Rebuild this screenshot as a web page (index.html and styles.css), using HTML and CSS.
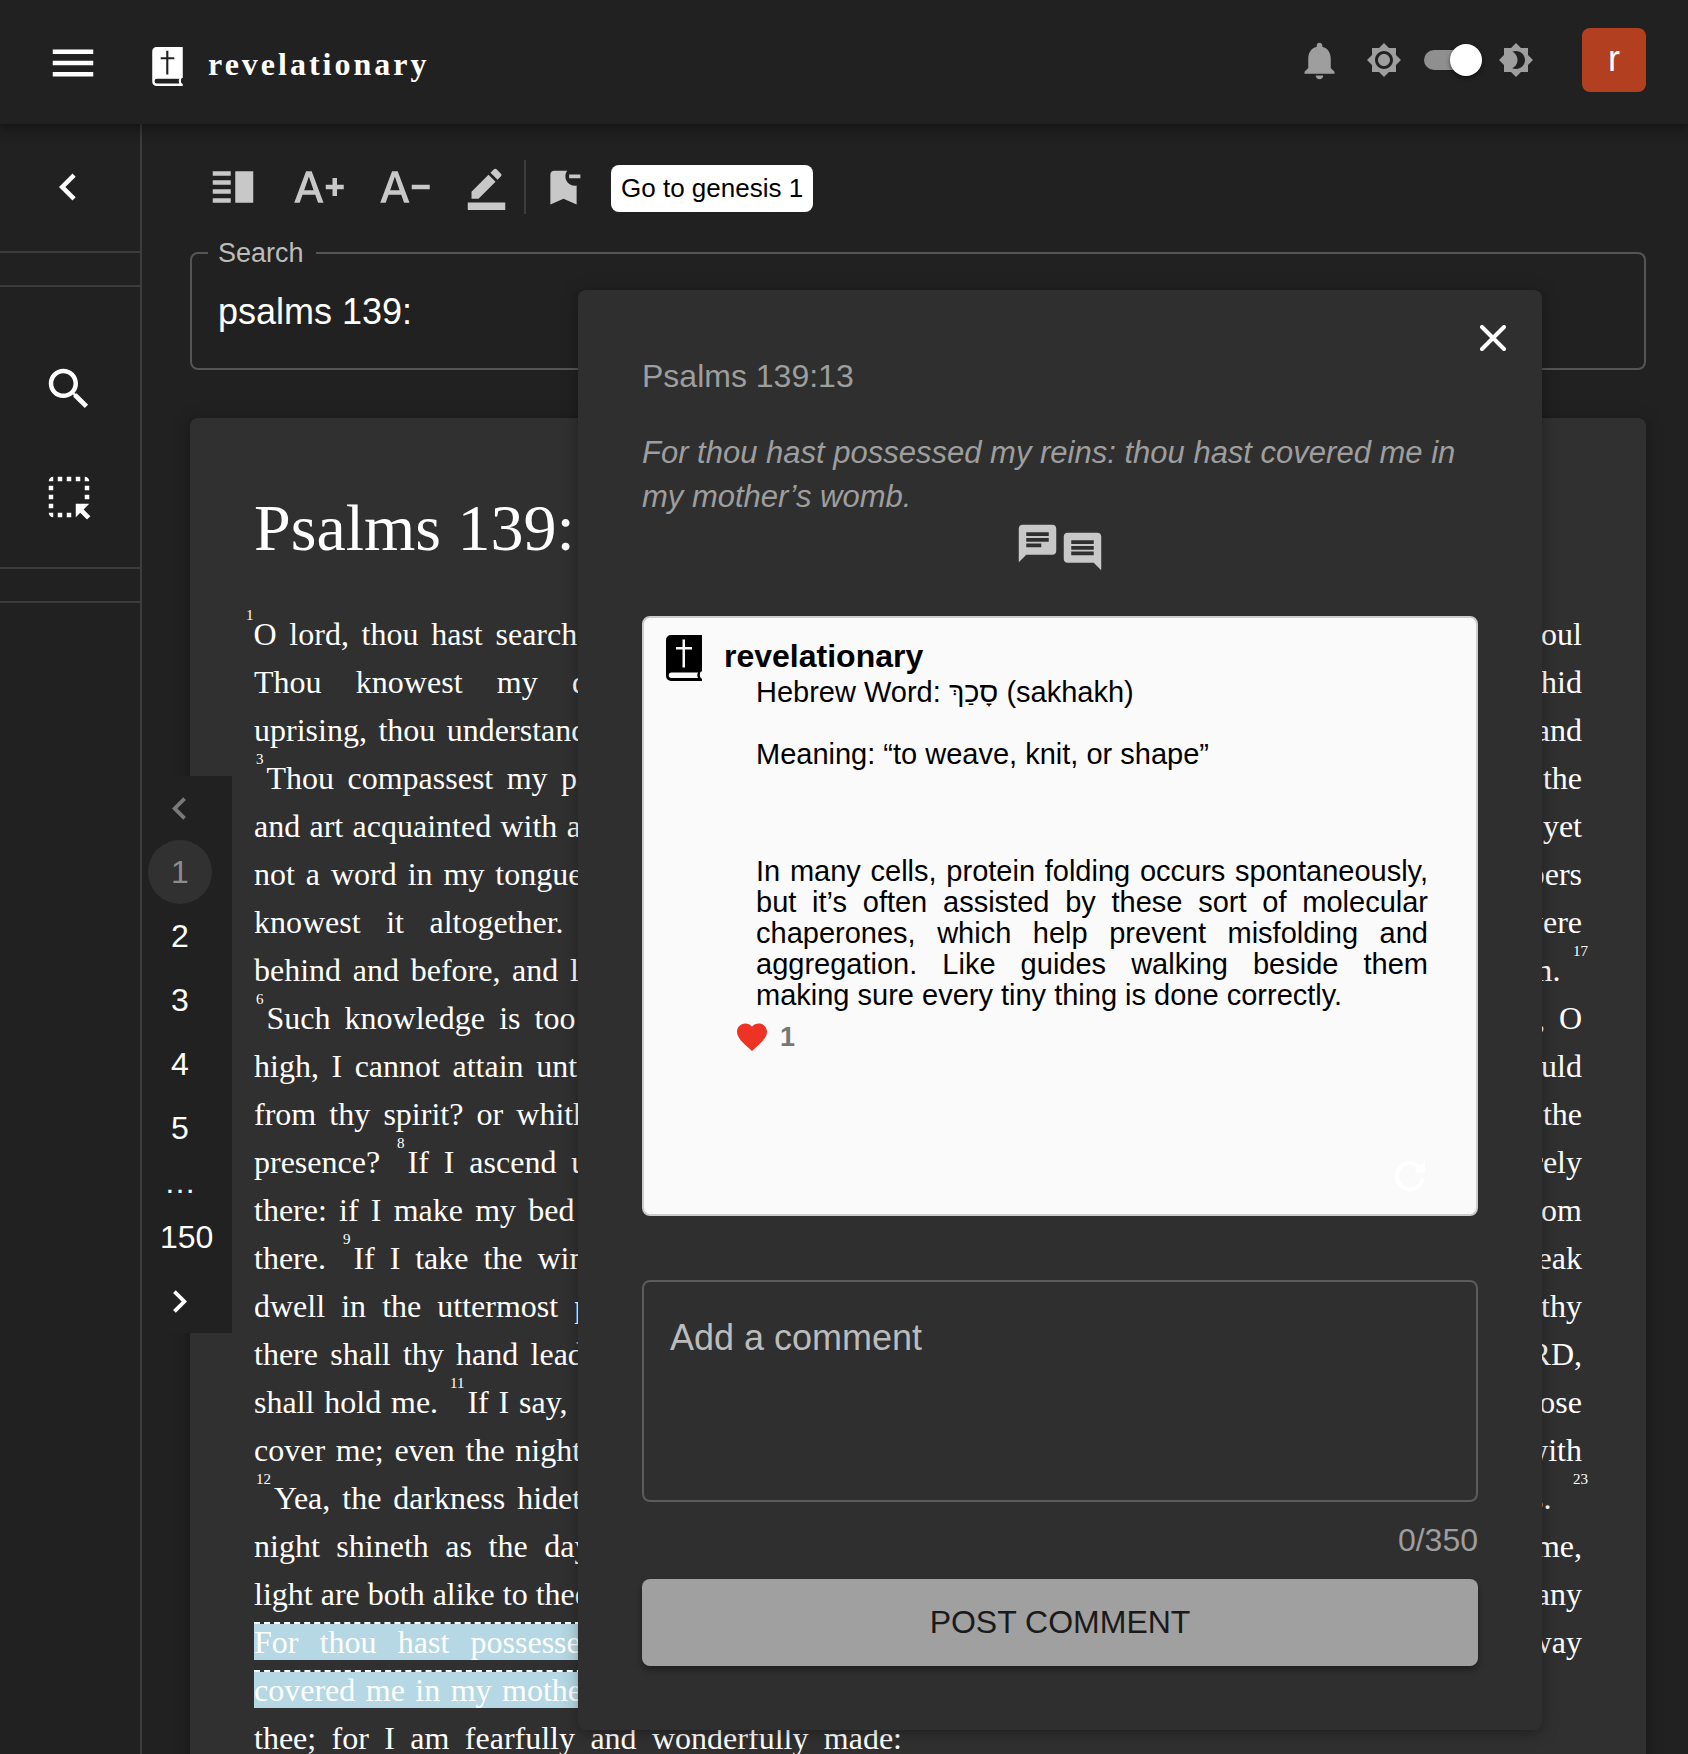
FILE: index.html
```html
<!DOCTYPE html>
<html lang="en">
<head>
<meta charset="utf-8">
<title>revelationary</title>
<link rel="stylesheet" href="styles.css">
</head>
<body>
<svg width="0" height="0" hidden>
  <symbol id="book" viewBox="0 0 36 46">
    <path fill-rule="evenodd" d="M5 0H36V36.500H35C33.500 37.500 33.500 42 35 43L36 44V46H5A5 5 0 0 1 0 41V5A5 5 0 0 1 5 0ZM5.500 37.500A2.700 2.700 0 0 0 5.500 43H32C31 41 31 39.500 32 37.500ZM16.500 4.500V12H10V14.500H16.500V32.500H19V14.500H26V12H19V4.500Z"/>
  </symbol>
  <symbol id="chev" viewBox="0 0 24 24"><path d="M15.410 7.410 14 6l-6 6 6 6 1.410-1.410L10.830 12z"/></symbol>
</svg>

<header class="topbar">
  <button class="icon-btn menu" aria-label="Menu"><svg class="icon i-lg" viewBox="0 0 24 24"><path d="M3 18h18v-2H3v2zm0-5h18v-2H3v2zm0-7v2h18V6H3z"/></svg></button>
  <a class="brand" href="#"><svg class="brand-logo"><use href="#book"/></svg><span>revelationary</span></a>
  <div class="actions">
    <button class="icon-btn" aria-label="Notifications"><svg class="icon i-md" viewBox="0 0 24 24"><path d="M12 22c1.100 0 2-.9 2-2h-4c0 1.100.89 2 2 2zm6-6v-5c0-3.070-1.640-5.640-4.500-6.320V4c0-.83-.67-1.500-1.500-1.500s-1.500.67-1.500 1.500v.68C7.630 5.360 6 7.920 6 11v5l-2 2v1h16v-1l-2-2z"/></svg></button>
    <label class="theme" for="dark">
      <svg class="icon i-sm" viewBox="0 0 24 24"><path d="M20 8.690V4h-4.690L12 .69 8.690 4H4v4.690L.69 12 4 15.310V20h4.690L12 23.310 15.310 20H20v-4.690L23.310 12 20 8.690zM12 18c-3.310 0-6-2.690-6-6s2.690-6 6-6 6 2.690 6 6-2.690 6-6 6zm0-10c-2.210 0-4 1.790-4 4s1.790 4 4 4 4-1.790 4-4-1.790-4-4-4z"/></svg>
      <input id="dark" class="switch" type="checkbox" role="switch" aria-label="Dark theme" checked>
      <svg class="icon i-sm" viewBox="0 0 24 24"><path d="M20 8.690V4h-4.690L12 .69 8.690 4H4v4.690L.69 12 4 15.310V20h4.690L12 23.310 15.310 20H20v-4.690L23.310 12 20 8.690zM12 18c-.89 0-1.740-.2-2.500-.55C11.560 16.500 13 14.420 13 12s-1.440-4.500-3.500-5.450C10.260 6.200 11.110 6 12 6c3.310 0 6 2.690 6 6s-2.690 6-6 6z"/></svg>
    </label>
    <button class="avatar">r</button>
  </div>
</header>

<div class="shell">
  <nav class="rail" aria-label="Tools">
    <div class="rail-top"><button class="icon-btn" aria-label="Collapse"><svg class="icon i-lg"><use href="#chev"/></svg></button></div>
    <div class="rail-tools">
      <button class="icon-btn" aria-label="Search"><svg class="icon i-lg" viewBox="0 0 24 24"><path d="M15.500 14h-.79l-.28-.27C15.410 12.590 16 11.110 16 9.500 16 5.910 13.090 3 9.500 3S3 5.910 3 9.500 5.910 16 9.500 16c1.610 0 3.090-.59 4.230-1.570l.27.28v.79l5 4.990L20.490 19l-4.990-5zm-6 0C7.010 14 5 11.990 5 9.500S7.010 5 9.500 5 14 7.010 14 9.500 11.990 14 9.500 14z"/></svg></button>
      <button class="icon-btn" aria-label="Select"><svg class="icon i-lg" viewBox="0 0 24 24"><path d="M17 5h-2V3h2v2zm-2 16 2-2 3 3 1.500-1.500-3-3L21 15h-6v6zm4-12h2V7h-2v2zm0 4h2v-2h-2v2zm-8 8h2v-2h-2v2zM7 5h2V3H7v2zM3 17h2v-2H3v2zm2 4v-2H3c0 1.100.9 2 2 2zM19 3v2h2c0-1.100-.9-2-2-2zm-8 2h2V3h-2v2zM3 9h2V7H3v2zm4 12h2v-2H7v2zm-4-8h2v-2H3v2zm0-8h2V3c-1.100 0-2 .9-2 2z"/></svg></button>
    </div>
    <div class="rail-gap"></div>
  </nav>

  <main class="content">
    <div class="toolbar">
      <button class="icon-btn" aria-label="Columns"><svg class="icon i-lg" viewBox="0 0 24 24"><path d="M3 15h8v-2H3v2zm0 4h8v-2H3v2zm0-8h8V9H3v2zm0-6v2h8V5H3zm10 0h8v14h-8V5z"/></svg></button>
      <button class="icon-btn" aria-label="Larger text"><svg class="icon i-lg" viewBox="0 0 24 24"><path d="M.99 19h2.420l1.270-3.580h5.650L11.590 19h2.420L8.750 5h-2.500L.99 19zm4.420-5.610L7.440 7.600h.12l2.030 5.790H5.410zM20 11h3v2h-3v3h-2v-3h-3v-2h3V8h2v3z"/></svg></button>
      <button class="icon-btn" aria-label="Smaller text"><svg class="icon i-lg" viewBox="0 0 24 24"><path d="M.99 19h2.420l1.270-3.580h5.650L11.590 19h2.420L8.750 5h-2.500L.99 19zm4.420-5.610L7.440 7.600h.12l2.030 5.790H5.410zM23 11v2h-8v-2h8z"/></svg></button>
      <button class="icon-btn" aria-label="Highlight"><svg class="icon i-md" viewBox="0 0 24 24"><path d="M22 24H2v-4h20v4zM13.060 5.190l3.750 3.750L7.750 18H4v-3.750l9.060-9.060zm4.820 2.680-3.750-3.750 1.830-1.830c.39-.39 1.020-.39 1.410 0l2.340 2.340c.39.39.39 1.020 0 1.410l-1.830 1.830z"/></svg></button>
      <span class="divider"></span>
      <button class="icon-btn" aria-label="Remove bookmark"><svg class="icon i-md" viewBox="0 0 24 24"><path d="M21 7h-6V5h6v2zm-2 3.900c-.32.07-.66.1-1 .1-2.760 0-5-2.240-5-5 0-1.130.37-2.160 1-3H7c-1.100 0-2 .9-2 2v16l7-3 7 3V10.900z"/></svg></button>
      <button class="goto">Go to genesis 1</button>
    </div>

    <fieldset class="search">
      <legend><label for="q">Search</label></legend>
      <input id="q" type="text" value="psalms 139:">
    </fieldset>

    <article class="chapter">
      <h1>Psalms 139:</h1>
      <div class="columns">
        <p><sup class="first">1</sup>O lord, thou hast searched me, and known me. <sup class="end">2</sup><br>
Thou knowest my downsitting and mine<br>
uprising, thou understandest my thought afar off.<br>
<sup>3</sup>Thou compassest my path and my lying down,<br>
and art acquainted with all my ways. <sup>4</sup>For there is<br>
not a word in my tongue, but, lo, O LORD, thou<br>
knowest it altogether. <sup>5</sup>Thou hast beset me<br>
behind and before, and laid thine hand upon me.<br>
<sup>6</sup>Such knowledge is too wonderful for me; it is<br>
high, I cannot attain unto it. <sup>7</sup>Whither shall I go<br>
from thy spirit? or whither shall I flee from thy<br>
presence? <sup>8</sup>If I ascend up into heaven, thou art<br>
there: if I make my bed in hell, behold, thou art<br>
there. <sup>9</sup>If I take the wings of the morning, and<br>
dwell in the uttermost parts of the sea; <sup>10</sup>Even<br>
there shall thy hand lead me, and thy right hand<br>
shall hold me. <sup>11</sup>If I say, Surely the darkness shall<br>
cover me; even the night shall be light about me.<br>
<sup>12</sup>Yea, the darkness hideth not from thee; but the<br>
night shineth as the day: the darkness and the<br>
<span class="last">light are both alike to thee. <sup>13</sup></span>
<mark>For thou hast possessed my reins: thou hast<br>
covered me in my mother’s womb.</mark> <sup>14</sup>I will praise<br>
thee; for I am fearfully and wonderfully made:</p>
        <p>marvellous are thy works; and that my soul<br>
knoweth right well. <sup>15</sup>My substance was not hid<br>
from thee, when I was made in secret, and<br>
curiously wrought in the lowest parts of the<br>
earth. <sup>16</sup>Thine eyes did see my substance, yet<br>
being unperfect; and in thy book all my members<br>
were written, which in continuance were<br>
fashioned, when as yet there was none of them. <sup class="end">17</sup><br>
How precious also are thy thoughts unto me, O<br>
God! how great is the sum of them! <sup>18</sup>If I should<br>
count them, they are more in number than the<br>
sand: when I awake, I am still with thee. <sup>19</sup>Surely<br>
thou wilt slay the wicked, O God: depart from<br>
me therefore, ye bloody men. <sup>20</sup>For they speak<br>
against thee wickedly, and thine enemies take thy<br>
name in vain. <sup>21</sup>Do not I hate them, O LORD,<br>
that hate thee? and am not I grieved with those<br>
that rise up against thee? <sup>22</sup>I hate them with<br>
perfect hatred: I count them mine enemies. <sup class="end">23</sup><br>
Search me, O God, and know my heart: try me,<br>
and know my thoughts: <sup>24</sup>And see if there be any<br>
wicked way in me, and lead me in the way<br>
<span class="last">everlasting.</span></p>
      </div>
    </article>
  </main>
</div>

<nav class="pager" aria-label="Chapters">
  <button disabled aria-label="Previous"><svg class="icon i-md"><use href="#chev"/></svg></button>
  <button class="current">1</button>
  <button>2</button>
  <button>3</button>
  <button>4</button>
  <button>5</button>
  <span>…</span>
  <button>150</button>
  <button aria-label="Next"><svg class="icon i-md flip"><use href="#chev"/></svg></button>
</nav>

<section class="dialog" role="dialog" aria-labelledby="ref">
  <button class="close" aria-label="Close"><svg viewBox="0 0 26 26"><path d="M2 2 24 24M24 2 2 24"/></svg></button>
  <h2 id="ref">Psalms 139:13</h2>
  <blockquote>For thou hast possessed my reins: thou hast covered me in my mother’s womb.</blockquote>
  <div class="talk">
    <svg class="icon i-md" viewBox="0 0 24 24"><path d="M20 2H4c-1.100 0-1.990.9-1.990 2L2 22l4-4h14c1.100 0 2-.9 2-2V4c0-1.100-.9-2-2-2zM6 9h12v2H6V9zm8 5H6v-2h8v2zm4-6H6V6h12v2z"/></svg>
    <svg class="icon i-md" viewBox="0 0 24 24"><path d="M21.990 4c0-1.100-.89-2-1.990-2H4c-1.100 0-2 .9-2 2v12c0 1.100.9 2 2 2h14l4 4-.01-18zM18 14H6v-2h12v2zm0-3H6V9h12v2zm0-3H6V6h12v2z"/></svg>
  </div>
  <div class="comments">
    <svg class="author-logo"><use href="#book"/></svg>
    <div class="comment">
      <h3>revelationary</h3>
      <div class="comment-text">
        <p>Hebrew Word: סָכַךְ (sakhakh)</p>
        <p>Meaning: “to weave, knit, or shape”</p>
        <p class="note">In many cells, protein folding occurs spontaneously, but it’s often assisted by these sort of molecular chaperones, which help prevent misfolding and aggregation. Like guides walking beside them making sure every tiny thing is done correctly.</p>
      </div>
      <button class="like"><svg class="icon i-sm" viewBox="0 0 24 24"><path d="m12 21.350-1.450-1.320C5.400 15.360 2 12.280 2 8.500 2 5.420 4.420 3 7.500 3c1.740 0 3.410.81 4.500 2.090C13.090 3.810 14.760 3 16.500 3 19.580 3 22 5.420 22 8.500c0 3.780-3.400 6.860-8.550 11.540L12 21.350z"/></svg>1</button>
    </div>
    <button class="refresh" aria-label="Refresh"><svg viewBox="0 0 32 32"><path class="arc" d="M28.500 19.500A13 13 0 1 1 24 6"/><path d="M31 1V11.500Q31 12.500 30 12.500H22.500Q20 12.500 21.500 10.500Z"/></svg></button>
  </div>
  <textarea aria-label="Add a comment" placeholder="Add a comment" maxlength="350"></textarea>
  <p class="count">0/350</p>
  <button class="post">POST COMMENT</button>
</section>
</body>
</html>
```
FILE: styles.css
```css
* { box-sizing: border-box; margin: 0; padding: 0; }
html, body { height: 100%; }
body {
  background: #212121;
  color: #fff;
  font: 32px/48px "Liberation Sans", Arial, sans-serif;
  overflow: hidden;
  display: flex;
  flex-direction: column;
}
button { font: inherit; color: inherit; background: none; border: 0; }
.icon { display: block; fill: currentColor; }
.i-lg { width: 54px; height: 54px; }
.i-md { width: 45px; height: 45px; }
.i-sm { width: 36px; height: 36px; }
.icon-btn { flex: none; }
.flip { transform: scaleX(-1); }

/* Top bar */
.topbar {
  flex: none;
  height: 124px;
  display: flex;
  align-items: center;
  padding: 0 42px 0 46px;
  position: relative;
  z-index: 2;
  background: #212121;
  box-shadow: 0 4px 8px -2px rgba(0, 0, 0, .2), 0 8px 10px rgba(0, 0, 0, .14), 0 2px 20px rgba(0, 0, 0, .12);
}
.menu { padding-top: 2px; }
.brand {
  display: flex;
  align-items: center;
  gap: 25px;
  margin-left: 52px;
  padding-top: 8px;
  color: #fff;
  text-decoration: none;
  font: bold 32px/36px "Liberation Serif", "Times New Roman", serif;
  letter-spacing: 3px;
}
.brand span { padding-bottom: 5px; }
.brand-logo { width: 31px; height: 39px; fill: #fff; }
.actions { display: flex; align-items: center; margin-left: auto; padding-bottom: 4px; color: #9e9e9e; }
.theme { display: flex; align-items: center; gap: 16px; margin: 0 48px 0 24px; }
.switch {
  appearance: none;
  position: relative;
  width: 64px;
  height: 32px;
  display: flex;
  align-items: center;
  justify-content: flex-end;
}
.switch::before {
  content: "";
  position: absolute;
  left: 6px;
  width: 52px;
  height: 20px;
  border-radius: 10px;
  background: #8f8f8f;
}
.switch::after {
  content: "";
  position: relative;
  width: 32px;
  height: 32px;
  border-radius: 50%;
  background: #fff;
  box-shadow: 0 2px 4px rgba(0, 0, 0, .5);
}
.avatar { width: 64px; height: 64px; padding-bottom: 2px; border-radius: 8px; background: #b24020; color: #fff; font-size: 36px; }

/* Side rail */
.shell { flex: 1; min-height: 0; display: flex; }
.rail { flex: none; width: 142px; border-right: 2px solid #3c3c3c; }
.rail-top { height: 129px; padding: 36px 0 0 41px; border-bottom: 2px solid #3c3c3c; }
.rail-tools {
  margin-top: 32px;
  padding: 75px 0 43px 42px;
  display: grid;
  gap: 54px;
  justify-items: start;
  border: solid #3c3c3c;
  border-width: 2px 0;
}
.rail-gap { height: 34px; border-bottom: 2px solid #3c3c3c; }

/* Reader */
.content { flex: 1; min-width: 0; padding: 36px 42px 0 48px; }
.toolbar { display: flex; align-items: center; height: 54px; padding-left: 16px; color: #c8c8c8; gap: 32px; }
.divider { width: 2px; height: 54px; background: #3c3c3c; margin: 0 -17px; }
.goto { height: 47px; margin: 2px 0 0 -7px; padding: 0 10px; border-radius: 8px; background: #fff; color: #000; font-size: 26px; line-height: 46px; }
.search { height: 131px; margin-top: 25px; padding: 0 26px; border: 2px solid #555; border-radius: 8px; min-width: 0; }
.search legend { padding: 0 12px 0 10px; margin-left: -10px; color: #bcbcbc; font-size: 27px; line-height: 28px; }
.search input { display: block; width: 100%; height: 90px; background: none; border: 0; outline: 0; color: #fff; font: 36px/44px "Liberation Sans", Arial, sans-serif; }
.chapter {
  margin-top: 48px;
  padding: 66px 64px 64px;
  min-height: 1400px;
  border-radius: 8px;
  background: #303030;
  box-shadow: 0 4px 8px -2px rgba(0, 0, 0, .2), 0 2px 20px rgba(0, 0, 0, .2);
  font-family: "Liberation Serif", "Times New Roman", serif;
}
.chapter h1 { font-size: 66px; font-weight: 400; line-height: 88px; margin-bottom: 38px; }
.columns { display: grid; grid-template-columns: 1fr 1fr; gap: 32px; }
.columns p { text-align: justify; text-align-last: justify; white-space: nowrap; }
sup { font-size: 15px; line-height: 0; vertical-align: 25px; margin: 0 3px 0 2px; }
sup.first { margin: 0 0 0 -8px; }
sup.end { margin-right: -6px; }
.last { display: block; text-align-last: left; }
mark { background: #b5d8e4; background-clip: padding-box; color: #fff; border-top: 2px dashed #fff; }

/* Chapter pager */
.pager {
  position: absolute;
  left: 148px;
  top: 776px;
  display: grid;
  justify-items: start;
  padding-right: 7px;
  background: #212121;
}
.pager button { min-width: 64px; height: 64px; padding: 0 12px; border-radius: 32px; line-height: 64px; }
.pager button:has(.icon) { padding: 0 9px; }
.pager button:disabled { color: #7a7a7a; }
.pager .current { background: #313131; color: #8c8c8c; }
.pager span { width: 64px; height: 45px; line-height: 44px; text-align: center; }

/* Comment dialog */
.dialog {
  position: absolute;
  z-index: 3;
  top: 290px;
  left: 578px;
  right: 146px;
  padding: 64px;
  display: flex;
  flex-direction: column;
  border-radius: 8px;
  background: #2f2f2f;
  box-shadow: 0 4px 8px -2px rgba(0, 0, 0, .2), 0 2px 20px rgba(0, 0, 0, .2);
}
.close { position: absolute; top: 35px; right: 36px; }
.close svg { display: block; width: 26px; height: 26px; fill: none; stroke: #fff; stroke-width: 4; stroke-linecap: round; }
.dialog h2 { font-size: 32px; font-weight: 400; line-height: 44px; color: #9e9e9e; }
.dialog blockquote { margin-top: 33px; font-size: 31px; font-style: italic; line-height: 44px; color: #9e9e9e; }
.talk { display: flex; justify-content: center; margin-top: 2px; color: #c8c8c8; }
.talk .icon:last-child { margin-top: 8px; }
.comments {
  position: relative;
  height: 600px;
  margin-top: 42px;
  padding: 17px 48px 0 22px;
  display: flex;
  gap: 22px;
  border: 2px solid #ccc;
  border-radius: 8px;
  background: #fafafa;
  color: #000;
}
.author-logo { flex: none; width: 36px; height: 46px; }
.comment { flex: 1; }
.comment h3 { font-size: 32px; line-height: 42px; }
.comment-text { margin-left: 32px; font-size: 29px; line-height: 31px; text-align: justify; }
.comment-text p + p { margin-top: 31px; }
.comment-text p.note { margin-top: 86px; }
.like { display: flex; align-items: center; gap: 10px; margin: 8px 0 0 10px; font-size: 27px; line-height: 36px; font-weight: bold; color: #777; }
.like .icon { fill: #ed3324; }
.refresh { position: absolute; right: 50px; bottom: 22px; }
.refresh svg { display: block; width: 32px; height: 32px; fill: #fff; }
.refresh .arc { fill: none; stroke: #fff; stroke-width: 4; stroke-linecap: round; }
.dialog textarea {
  height: 222px;
  margin-top: 64px;
  padding: 34px 26px;
  resize: none;
  background: none;
  border: 2px solid #5c5c5c;
  border-radius: 8px;
  color: #fff;
  font: 36px/44px "Liberation Sans", Arial, sans-serif;
}
.dialog textarea::placeholder { color: #bcbcbc; opacity: 1; }
.count { margin-top: 14px; text-align: right; color: #9e9e9e; }
.post { height: 87px; margin-top: 15px; padding-bottom: 2px; border-radius: 8px; background: #a0a0a0; color: #1a1a1a; box-shadow: 0 4px 6px rgba(0, 0, 0, .35); }
```
